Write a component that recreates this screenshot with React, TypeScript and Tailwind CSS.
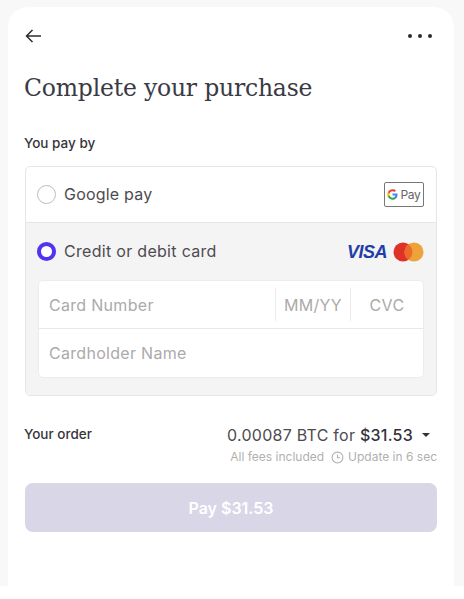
import React from "react";

const GoogleG = () => (
  <svg width="11" height="11" viewBox="0 0 24 24" aria-hidden="true">
    <path fill="#4285F4" d="M23 12.3c0-.8-.1-1.600-.2-2.300H12v4.400h6.200c-.3 1.400-1.100 2.600-2.300 3.400v2.800h3.700c2.100-2 3.400-4.900 3.400-8.300z" />
    <path fill="#34A853" d="M12 23.500c3.100 0 5.700-1 7.600-2.800l-3.700-2.900c-1 .7-2.300 1.100-3.900 1.100-3 0-5.500-2-6.400-4.700H1.800v2.900c1.900 3.800 5.800 6.400 10.200 6.400z" />
    <path fill="#FBBC05" d="M5.600 14.200c-.5-1.400-.5-3 0-4.400V6.900H1.800c-1.600 3.200-1.600 7 0 10.200l3.800-2.900z" />
    <path fill="#EA4335" d="M12 5c1.700 0 3.200.6 4.400 1.700l3.300-3.300C17.700 1.500 15.100.5 12 .5 7.600.5 3.700 3.100 1.800 6.900l3.800 2.900C6.500 7 9 5 12 5z" />
  </svg>
);

const Mastercard = () => (
  <svg width="31" height="20" viewBox="0 0 31 20" aria-hidden="true">
    <circle cx="10" cy="10" r="9.500" fill="#DE3226" />
    <circle cx="21" cy="10" r="9.500" fill="#EDA23C" />
    <path d="M15.500 2.300a9.500 9.500 0 0 1 0 15.400a9.500 9.500 0 0 1 0-15.400z" fill="#EE6A26" />
  </svg>
);

const ClockIcon = () => (
  <svg width="13" height="13" viewBox="0 0 12 12" fill="none" stroke="#b0b0b0" strokeWidth="1" aria-hidden="true">
    <circle cx="6" cy="6" r="5" />
    <path d="M6 3.300V6.300H8.300" />
  </svg>
);

export default function App() {
  return (
    <div className="h-[599px] w-[464px] bg-white font-['Inter',sans-serif] overflow-hidden">
      <div className="h-[586px] bg-[#f8f8f8] pl-2 pr-[10px] pt-[7px]">
        <div className="h-full rounded-t-[20px] bg-white px-[17px]">
          {/* top bar */}
          <div className="flex h-[58px] items-center justify-between pr-[5px]">
            <svg width="16" height="14" viewBox="0 0 16 14" fill="none" stroke="#2c2c2c" strokeWidth="1.500" aria-hidden="true">
              <path d="M16 7H1.500M7.500 1 1.500 7l6 6" />
            </svg>
            <div className="flex gap-[6px]">
              <span className="h-1 w-1 rounded-full bg-[#2c2c2c]" />
              <span className="h-1 w-1 rounded-full bg-[#2c2c2c]" />
              <span className="h-1 w-1 rounded-full bg-[#2c2c2c]" />
            </div>
          </div>

          <h1 className="mt-[5px] h-[36px] -ml-[1px] font-['DejaVu_Serif',serif] text-[23.500px] leading-[36px] tracking-[-0.2px] text-[#3a3a44]">
            Complete your purchase
          </h1>

          <p className="-ml-[1px] mt-[27px] h-[20px] text-[13.500px] font-medium leading-[20px] text-[#38343a]">You pay by</p>

          {/* payment methods */}
          <div className="mt-[13px] overflow-hidden rounded-[5px] border border-[#e6e6e6] bg-white">
            <div className="flex h-[56px] items-center justify-between border-b border-[#e6e6e6] pl-[11px] pr-[12px]">
              <div className="flex items-center gap-[8px]">
                <span className="h-[19px] w-[19px] rounded-full border border-[#bdbdbd] bg-white" />
                <span className="-mt-[2px] text-[16px] tracking-[0.2px] text-[#4e4b50]">Google pay</span>
              </div>
              <div className="flex h-[25px] w-[40px] items-center justify-center gap-[2px] rounded-[2px] border border-[#777] bg-white">
                <GoogleG />
                <span className="text-[12px] tracking-[-0.3px] text-[#666]">Pay</span>
              </div>
            </div>

            <div className="h-[172px] bg-[#f4f4f4] pl-[11px] pr-[12px]">
              <div className="flex h-[57px] items-center justify-between">
                <div className="flex items-center gap-[8px]">
                  <span className="h-[19px] w-[19px] rounded-full border-[4px] border-[#5433f0] bg-white" />
                  <span className="-mt-[2px] text-[16px] tracking-[0.3px] text-[#4e4b50]">Credit or debit card</span>
                </div>
                <div className="flex items-center gap-[6px]">
                  <span className="font-['Liberation_Sans',sans-serif] text-[18px] font-bold italic leading-none tracking-[-0.5px] text-[#1f3fa8]">VISA</span>
                  <Mastercard />
                </div>
              </div>

              {/* card fields */}
              <div className="ml-[1px] rounded-[5px] border border-[#ececec] bg-white text-[16px] tracking-[0.3px] text-[#acaaaa]">
                <div className="flex h-[48px] items-center border-b border-[#e8e8e8]">
                  <span className="flex-1 pl-[10px]">Card Number</span>
                  <div className="flex h-[33px] w-[75px] items-center justify-center border-l border-[#ececec]">MM/YY</div>
                  <div className="flex h-[33px] w-[73px] items-center justify-center border-l border-[#ececec]">CVC</div>
                </div>
                <div className="flex h-[48px] items-center pl-[10px]">Cardholder Name</div>
              </div>
            </div>
          </div>

          {/* order */}
          <div className="mt-[28px] flex items-start justify-between">
            <span className="-ml-[1px] -mt-[1px] text-[13.500px] font-medium leading-[22px] text-[#38343a]">Your order</span>
            <div className="flex flex-col items-end">
              <div className="flex items-center gap-[9px] pr-[7px] text-[16px] leading-[22px] tracking-[0.25px] text-[#4e4b50]">
                <span>
                  0.00087 BTC for <span className="font-medium text-[#33303a]">$31.53</span>
                </span>
                <span className="h-0 w-0 border-x-[4px] border-t-[4px] border-x-transparent border-t-[#333]" />
              </div>
              <div className="mt-[3px] flex items-center text-[12px] leading-[16px] text-[#b0b0b0]">
                <span>All fees included</span>
                <span className="ml-[7px] mr-[4px]">
                  <ClockIcon />
                </span>
                <span>Update in 6 sec</span>
              </div>
            </div>
          </div>

          <button
            type="button"
            disabled
            className="mt-[18px] h-[49px] w-full rounded-[8px] bg-[#d9d6e8] text-[16px] font-semibold text-white"
          >
            Pay $31.53
          </button>
        </div>
      </div>
    </div>
  );
}
